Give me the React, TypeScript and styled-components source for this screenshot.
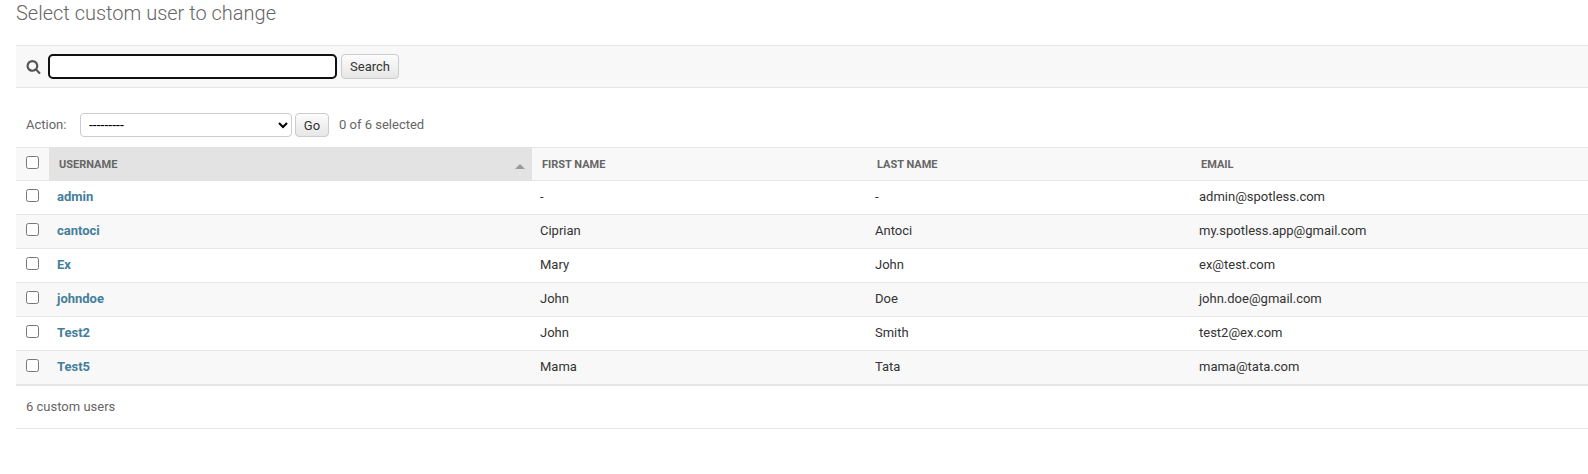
import React from "react";
import styled, { createGlobalStyle } from "styled-components";

const GlobalStyle = createGlobalStyle`
  *, *::before, *::after { box-sizing: border-box; }
  body {
    margin: 0;
    background: #fff;
    color: #333;
    font-family: Roboto, "Liberation Sans", sans-serif;
    font-size: 13px;
    overflow: hidden;
  }
`;

const Page = styled.main`
  padding-left: 16px;
`;

const Title = styled.h1`
  margin: 0;
  height: 45px;
  padding-top: 1px;
  font-size: 20px;
  line-height: 24px;
  font-weight: 300;
  color: #666;
`;

const Toolbar = styled.form`
  display: flex;
  align-items: center;
  height: 43px;
  padding-left: 10px;
  background: #f8f8f8;
  border-top: 1px solid #e6e6e6;
  border-bottom: 1px solid #e6e6e6;
`;

const SearchIcon = styled.svg`
  width: 15px;
  height: 15px;
  margin-right: 7px;
  fill: #555;
`;

const SearchInput = styled.input`
  width: 289px;
  height: 25px;
  margin: 0 4px 0 0;
  padding: 2px 6px;
  border: 2px solid #101010;
  border-radius: 5px;
  background: #fff;
  font: inherit;
  outline: none;
`;

const Button = styled.button<{ $width: number; $height: number }>`
  width: ${(p) => p.$width}px;
  height: ${(p) => p.$height}px;
  padding: 0;
  border: 1px solid #ccc;
  border-radius: 4px;
  background: linear-gradient(#fcfcfc, #e6e6e6);
  color: #333;
  font: inherit;
  line-height: 15px;
`;

const Actions = styled.div`
  display: flex;
  align-items: center;
  height: 59px;
  padding: 15px 0 0 10px;
  color: #666;
`;

const ActionLabel = styled.label`
  display: flex;
  align-items: center;
`;

const ActionText = styled.span`
  width: 54px;
  padding-bottom: 2px;
  line-height: 15px;
`;

const ActionSelect = styled.select`
  width: 212px;
  height: 24px;
  margin: 0 3px 0 0;
  padding: 0 0 1px 4px;
  border: 1px solid #ccc;
  border-radius: 4px;
  background: #fff;
  color: #000;
  font-family: inherit;
  font-size: 14px;
`;

const Counter = styled.span`
  margin-left: 10px;
  padding-bottom: 2px;
  line-height: 15px;
`;

const Table = styled.table`
  width: 100%;
  table-layout: fixed;
  border-collapse: separate;
  border-spacing: 0;
  border-top: 1px solid #e6e6e6;
`;

const Col = styled.col<{ $width?: number }>`
  width: ${(p) => (p.$width ? `${p.$width}px` : "auto")};
`;

const HeadCell = styled.th<{ $sorted?: boolean }>`
  height: 33px;
  padding: 0 10px;
  background: ${(p) => (p.$sorted ? "#e3e3e3" : "#f8f8f8")};
  border-bottom: 1px solid ${(p) => (p.$sorted ? "#e3e3e3" : "#e6e6e6")};
  box-shadow: ${(p) => (p.$sorted ? "0 -1px #e3e3e3" : "none")};
  color: #666;
  font-size: 11px;
  font-weight: 700;
  text-align: left;
  text-transform: uppercase;
`;

const HeadContent = styled.div`
  display: flex;
  align-items: center;
  justify-content: space-between;
  height: 32px;
`;

const SortArrow = styled.span`
  margin: 5px -3px 0 0;
  border: 5px solid transparent;
  border-top: 0;
  border-bottom: 5px solid #999;
`;

const Row = styled.tr`
  background: #fff;
  &:nth-child(even) { background: #f8f8f8; }
`;

const Cell = styled.td<{ $link?: boolean }>`
  height: 34px;
  padding: 0 8px 2px;
  border-bottom: 1px solid #e6e6e6;
  line-height: 16px;
  color: ${(p) => (p.$link ? "#447e9b" : "#333")};
  font-weight: ${(p) => (p.$link ? 700 : 400)};
`;

const CheckCell = styled(Cell)`
  padding: 8px 10px 0;
  vertical-align: top;
`;

const Checkbox = styled.input.attrs({ type: "checkbox" })`
  display: block;
  width: 13px;
  height: 13px;
  margin: 0;
`;

const HeadCheckCell = styled(HeadCell)`
  padding-top: 8px;
  vertical-align: top;
`;

const Footer = styled.footer`
  display: flex;
  align-items: center;
  height: 44px;
  padding: 0 0 2px 10px;
  border-top: 1px solid #e6e6e6;
  border-bottom: 1px solid #e6e6e6;
  color: #666;
`;

const users = [
  ["admin", "-", "-", "admin@spotless.com"],
  ["cantoci", "Ciprian", "Antoci", "my.spotless.app@gmail.com"],
  ["Ex", "Mary", "John", "ex@test.com"],
  ["johndoe", "John", "Doe", "john.doe@gmail.com"],
  ["Test2", "John", "Smith", "test2@ex.com"],
  ["Test5", "Mama", "Tata", "mama@tata.com"],
];

export default function App() {
  return (
    <Page>
      <GlobalStyle />
      <Title>Select custom user to change</Title>
      <Toolbar>
        <SearchIcon viewBox="0 0 1792 1792">
          <path d="M1216 832q0-185-131.500-316.500t-316.500-131.500-316.500 131.500-131.500 316.500 131.500 316.500 316.500 131.500 316.500-131.500 131.500-316.500zm512 832q0 52-38 90t-90 38q-54 0-90-38l-343-342q-179 124-399 124-143 0-273.500-55.500t-225-150-150-225-55.500-273.500 55.500-273.500 150-225 225-150 273.500-55.500 273.500 55.500 225 150 150 225 55.500 273.500q0 220-124 399l343 343q37 37 37 90z" />
        </SearchIcon>
        <SearchInput type="text" aria-label="Search" />
        <Button type="button" $width={58} $height={25}>Search</Button>
      </Toolbar>
      <Actions>
        <ActionLabel>
          <ActionText>Action:</ActionText>
          <ActionSelect>
            <option>---------</option>
          </ActionSelect>
        </ActionLabel>
        <Button type="button" $width={34} $height={24}>Go</Button>
        <Counter>0 of 6 selected</Counter>
      </Actions>
      <Table>
        <colgroup>
          <Col $width={33} />
          <Col $width={483} />
          <Col $width={335} />
          <Col $width={324} />
          <Col />
        </colgroup>
        <thead>
          <tr>
            <HeadCheckCell><Checkbox /></HeadCheckCell>
            <HeadCell $sorted>
              <HeadContent>
                Username
                <SortArrow />
              </HeadContent>
            </HeadCell>
            <HeadCell>First name</HeadCell>
            <HeadCell>Last name</HeadCell>
            <HeadCell>Email</HeadCell>
          </tr>
        </thead>
        <tbody>
          {users.map(([username, first, last, email]) => (
            <Row key={username}>
              <CheckCell><Checkbox /></CheckCell>
              <Cell $link>{username}</Cell>
              <Cell>{first}</Cell>
              <Cell>{last}</Cell>
              <Cell>{email}</Cell>
            </Row>
          ))}
        </tbody>
      </Table>
      <Footer>6 custom users</Footer>
    </Page>
  );
}
